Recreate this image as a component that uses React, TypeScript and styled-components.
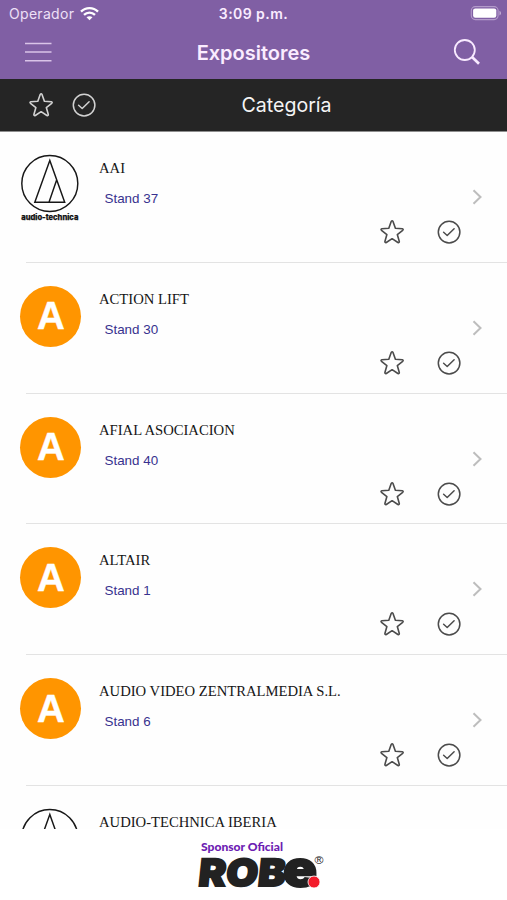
import React from "react";
import styled, { createGlobalStyle } from "styled-components";

const GlobalStyle = createGlobalStyle`
  * { box-sizing: border-box; }
  body { margin: 0; background: #fff; }
  svg { display: block; flex: none; overflow: visible; }
`;

const Screen = styled.div`
  width: 507px;
  height: 900px;
  display: flex;
  flex-direction: column;
  overflow: hidden;
  background: #fefefe;
  font-family: Inter, sans-serif;
`;

const Header = styled.header`
  height: 79px;
  flex: none;
  background: #805fa4;
  color: #faecff;
`;

const StatusBar = styled.div`
  height: 27px;
  display: grid;
  grid-template-columns: 1fr auto 1fr;
  align-items: center;
  padding: 0 6px 0 9px;
  font-size: 14px;
`;

const Carrier = styled.div`
  display: flex;
  align-items: center;
  gap: 6px;
  letter-spacing: 0.3px;
  color: #eee0f7;
`;

const Clock = styled.div`
  font-weight: 600;
  letter-spacing: 0.45px;
  padding-right: 3px;
`;

const BatterySlot = styled.div`
  display: flex;
  justify-content: flex-end;
`;

const NavBar = styled.div`
  height: 50px;
  display: grid;
  grid-template-columns: 1fr auto 1fr;
  align-items: center;
  padding: 0 26px 0 25px;
`;

const Title = styled.h1`
  margin: 0;
  padding: 2px 0 0 1px;
  font-size: 20px;
  font-weight: 600;
  line-height: 24px;
`;

const PlainButton = styled.button`
  border: 0;
  padding: 0;
  background: none;
  color: inherit;
  display: flex;
`;

const SearchButton = styled(PlainButton)`
  justify-self: end;
`;

const FilterBar = styled.div`
  height: 53px;
  flex: none;
  display: grid;
  grid-template-columns: 1fr auto 1fr;
  align-items: center;
  padding: 0 0 1px 66px;
  background: #252525;
  border-bottom: 1px solid #8e8e8e;
  color: #f4f4f4;
`;

const FilterIcons = styled.div`
  display: flex;
  gap: 19px;
  margin-left: -37px;
  color: #d2d2d2;
`;

const Category = styled.div`
  font-size: 19.6px;
  line-height: 24px;
`;

const List = styled.main`
  height: 697px;
  flex: none;
  overflow: hidden;
`;

const Row = styled.article`
  height: 130.75px;
  display: grid;
  grid-template-columns: 99px 1fr auto;
`;

const LogoCell = styled.div`
  padding: 23px 0 0 20px;
`;

const Initial = styled.div`
  width: 61px;
  height: 61px;
  margin-left: 0.4px;
  border-radius: 50%;
  display: flex;
  align-items: center;
  justify-content: center;
  background: #ff9500;
  color: #fff;
  font: bold 38.5px "Liberation Sans", sans-serif;
  -webkit-text-stroke: 0.4px #fff;
`;

const Name = styled.h2`
  margin: 27px 0 0;
  font: 400 14.65px/18px "Liberation Serif", serif;
  color: #151515;
  white-space: nowrap;
`;

const Stand = styled.p`
  margin: 13px 0 0 5.5px;
  font: 13.4px/18px "Liberation Sans", sans-serif;
  color: #38328f;
`;

const Actions = styled.div`
  width: 127px;
  display: flex;
  flex-direction: column;
`;

const Disclosure = styled.div`
  display: flex;
  justify-content: flex-end;
  padding: 57px 24px 0 0;
  color: #bdbdbd;
`;

const Toggles = styled.div`
  display: flex;
  gap: 33px;
  margin-top: 15px;
  color: #4b4b4b;
`;

const Divider = styled.div`
  grid-column: 1 / -1;
  height: 1px;
  margin-left: 26px;
  align-self: end;
  background: #e3e3e3;
`;

const Sponsor = styled.footer`
  height: 71px;
  flex: none;
  display: flex;
  padding: 11px 0 0 195px;
  background: #fff;
`;

const Star = () => (
  <svg width="24" height="24" viewBox="0 0 24 24" fill="none" stroke="currentColor" strokeWidth="1.6" strokeLinejoin="round">
    <path d="M11.2 1.4Q12.2.2 13 1.4L15.4 8.2 22.3 8.7Q23.8 9.2 22.7 10.3L17.3 14.6 19.3 21.4Q19.3 23 17.9 22.5L12.1 18.7 6.3 22.5Q4.9 23 4.9 21.4L6.9 14.6 1.5 10.3Q.4 9.2 1.9 8.7L8.8 8.2Z" />
  </svg>
);

const Check = () => (
  <svg width="24" height="24" viewBox="0 0 24 24" fill="none" stroke="currentColor" strokeWidth="1.5" strokeLinecap="round" strokeLinejoin="round">
    <circle cx="12.1" cy="12.1" r="10.8" />
    <path d="m6.6 12.3 3.6 3.2 6.9-6.7" />
  </svg>
);

const AudioTechnica = () => (
  <svg width="60" height="68" viewBox="0 0 60 68" fill="none" stroke="#171717" strokeWidth="1.45">
    <circle cx="29.8" cy="28.5" r="28" />
    <path d="M29.8 5.5 14.8 47.3H44.7ZM36.8 24.4 29 47.3" />
    <text x="1.2" y="65" textLength="57.2" lengthAdjust="spacingAndGlyphs" fill="#111" stroke="#111" strokeWidth="0.25" fontFamily="Inter" fontWeight="800" fontSize="7.4">audio-technica</text>
  </svg>
);

const RobeLogo = () => (
  <svg width="140" height="58" viewBox="0 0 140 58">
    <text x="6" y="11" textLength="82" lengthAdjust="spacingAndGlyphs" fill="#6c20b2" fontFamily="Lato" fontWeight="900" fontSize="10.8">Sponsor Oficial</text>
    <g fill="#222" stroke="#222" strokeWidth="1.8" fontFamily="Inter" fontWeight="900">
      <text transform="translate(2.5 45.6) skewX(-6)" textLength="87" lengthAdjust="spacingAndGlyphs" fontSize="37.5">ROB</text>
      <text transform="translate(88 45.6)" textLength="34" lengthAdjust="spacingAndGlyphs" fontSize="49">e</text>
    </g>
    <circle cx="119" cy="42" r="6" fill="#f31c2b" stroke="#fff" strokeWidth="0.8" />
    <text x="119.5" y="24" textLength="9" lengthAdjust="spacingAndGlyphs" fill="#222" fontFamily="Liberation Sans" fontSize="11.5">®</text>
  </svg>
);

const exhibitors = [
  { name: "AAI", stand: 37, logo: true },
  { name: "ACTION LIFT", stand: 30 },
  { name: "AFIAL ASOCIACION", stand: 40 },
  { name: "ALTAIR", stand: 1 },
  { name: "AUDIO VIDEO ZENTRALMEDIA S.L.", stand: 6 },
  { name: "AUDIO-TECHNICA IBERIA", logo: true },
];

export default function App() {
  return (
    <Screen>
      <GlobalStyle />
      <Header>
        <StatusBar>
          <Carrier>
            Operador
            <svg width="19" height="14" viewBox="0 0 19 14" fill="none" stroke="#fff" strokeWidth="2.4">
              <path d="M1 4.6c4.8-4.7 12.2-4.7 17 0M4 7.9c3.2-3 7.8-3 11 0" />
              <path d="m6.5 10.3 3 3 3-3c-1.7-1.5-4.3-1.5-6 0Z" fill="#fff" stroke="none" />
            </svg>
          </Carrier>
          <Clock>3:09 p.m.</Clock>
          <BatterySlot>
            <svg width="31" height="15" viewBox="0 0 31 15">
              <rect x="1.3" y=".6" width="26.8" height="13" rx="4" fill="none" stroke="#b39bca" strokeWidth="1.1" />
              <rect x="3.1" y="2.4" width="23.2" height="9.4" rx="2.2" fill="#fff" />
              <path d="M29.5 4.7c2 1 2 3.8 0 4.8Z" fill="#c6b0d6" />
            </svg>
          </BatterySlot>
        </StatusBar>
        <NavBar>
          <PlainButton aria-label="Menú">
            <svg width="27" height="22" viewBox="0 0 27 22" stroke="#d9c4e8" strokeWidth="1.6">
              <path d="M0 2.5h26.5M0 11h26.5M0 19.7h26.5" />
            </svg>
          </PlainButton>
          <Title>Expositores</Title>
          <SearchButton aria-label="Buscar">
            <svg width="28" height="28" viewBox="0 0 28 28" fill="none" stroke="#f8eaff">
              <circle cx="11.8" cy="12" r="10" strokeWidth="1.8" />
              <path d="m19 19 7 6.8" strokeWidth="2.7" />
            </svg>
          </SearchButton>
        </NavBar>
      </Header>
      <FilterBar>
        <FilterIcons><Star /><Check /></FilterIcons>
        <Category>Categoría</Category>
      </FilterBar>
      <List>
        {exhibitors.map(({ name, stand, logo }) => (
          <Row key={name}>
            <LogoCell>{logo ? <AudioTechnica /> : <Initial>A</Initial>}</LogoCell>
            <div>
              <Name>{name}</Name>
              {stand !== undefined && <Stand>Stand {stand}</Stand>}
            </div>
            <Actions>
              <Disclosure>
                <svg width="11" height="16" viewBox="0 0 11 16" fill="none" stroke="currentColor" strokeWidth="2">
                  <path d="m1.5 1.3 7 6.7-7 6.7" />
                </svg>
              </Disclosure>
              <Toggles><Star /><Check /></Toggles>
            </Actions>
            <Divider />
          </Row>
        ))}
      </List>
      <Sponsor><RobeLogo /></Sponsor>
    </Screen>
  );
}
